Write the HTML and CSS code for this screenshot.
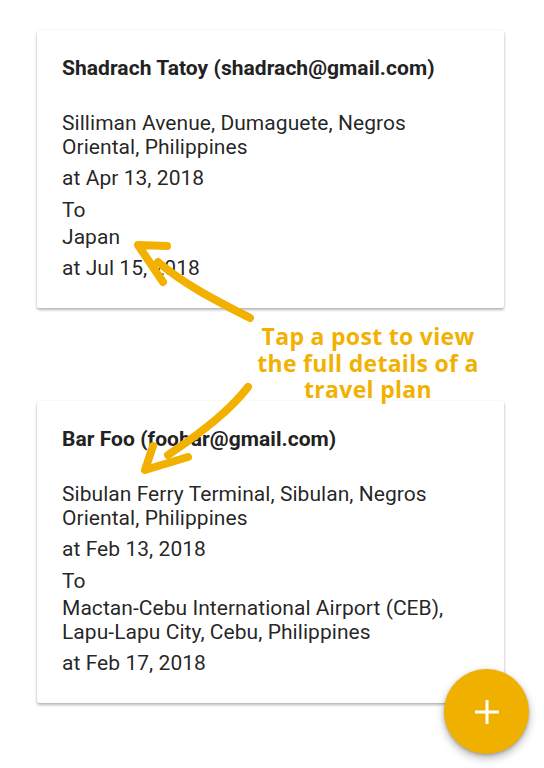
FILE: index.html
```html
<!DOCTYPE html>
<html>
<head>
<meta charset="utf-8">
<link rel="stylesheet" href="styles.css">
</head>
<body>
<main class="list">
  <article class="card">
    <h2 class="title">Shadrach Tatoy (shadrach@gmail.com)</h2>
    <p class="addr">Silliman Avenue, Dumaguete, Negros Oriental, Philippines</p>
    <p class="date">at Apr 13, 2018</p>
    <p class="to">To</p>
    <p class="dest">Japan</p>
    <p class="date">at Jul 15, 2018</p>
  </article>
  <article class="card">
    <h2 class="title">Bar Foo (foobar@gmail.com)</h2>
    <p class="addr">Sibulan Ferry Terminal, Sibulan, Negros Oriental, Philippines</p>
    <p class="date">at Feb 13, 2018</p>
    <p class="to">To</p>
    <p class="dest">Mactan-Cebu International Airport (CEB), Lapu-Lapu City, Cebu, Philippines</p>
    <p class="date">at Feb 17, 2018</p>
  </article>
</main>

<svg class="arrows" width="544" height="768" viewBox="0 0 544 768">
  <path d="M250 318 C 215 300, 185 285, 158 262" />
  <path d="M167 246 L138 245 L163 282" />
  <path d="M248 387 C 230 410, 205 430, 168 455" />
  <path d="M153 446 L145 470 L188 457" />
</svg>

<div class="hint">
  <span class="hint-line">Tap a post to view</span>
  <span class="hint-line">the full details of a</span>
  <span class="hint-line">travel plan</span>
</div>

<button class="fab" aria-label="Add">
  <svg width="26" height="26" viewBox="0 0 26 26"><path d="M13 1 V25 M1 13 H25" /></svg>
</button>
</body>
</html>
```
FILE: styles.css
```css
html, body {
  margin: 0;
  padding: 0;
  background: #ffffff;
}
body {
  font-family: Roboto, "Liberation Sans", sans-serif;
  color: rgba(0, 0, 0, 0.87);
  width: 544px;
  height: 768px;
  overflow: hidden;
  position: relative;
}
.list {
  display: flex;
  flex-direction: column;
  gap: 93px;
  padding: 30px 40px 0 37px;
}
.card {
  background: #fff;
  border-radius: 2px;
  box-shadow: 0 2px 3px rgba(0, 0, 0, 0.28), 0 0 2px rgba(0, 0, 0, 0.08);
  padding: 26px 25px 28px;
}
.title {
  margin: 0 0 31px;
  font-size: 21px;
  line-height: 24px;
  font-weight: 700;
  letter-spacing: 0.05px;
  color: #222;
}
.card p {
  margin: 0;
  font-size: 21px;
  line-height: 24px;
  letter-spacing: 0.05px;
}
.card .date { margin-top: 7px; }
.card .to { margin-top: 8px; }
.card .dest { margin-top: 3px; }

.arrows {
  position: absolute;
  left: 0;
  top: 0;
  pointer-events: none;
}
.arrows path {
  fill: none;
  stroke: #F2B100;
  stroke-width: 8;
  stroke-linecap: round;
  stroke-linejoin: round;
}
.hint {
  position: absolute;
  left: 238px;
  top: 323px;
  width: 260px;
  display: flex;
  flex-direction: column;
  align-items: center;
  font-family: "Open Sans", sans-serif;
  font-weight: 700;
  font-size: 23px;
  letter-spacing: 0.3px;
  color: #F2B100;
}
.hint-line {
  display: block;
  height: 26.5px;
  line-height: 26.5px;
  white-space: nowrap;
}
.fab {
  position: absolute;
  right: 15px;
  bottom: 14px;
  width: 85px;
  height: 85px;
  border: none;
  border-radius: 50%;
  background: #F0B000;
  box-shadow: 0 4px 8px rgba(0, 0, 0, 0.3), 0 1px 3px rgba(0, 0, 0, 0.2);
  display: flex;
  align-items: center;
  justify-content: center;
  padding: 0;
}
.fab path {
  stroke: #fff;
  stroke-width: 3;
  fill: none;
}
```
